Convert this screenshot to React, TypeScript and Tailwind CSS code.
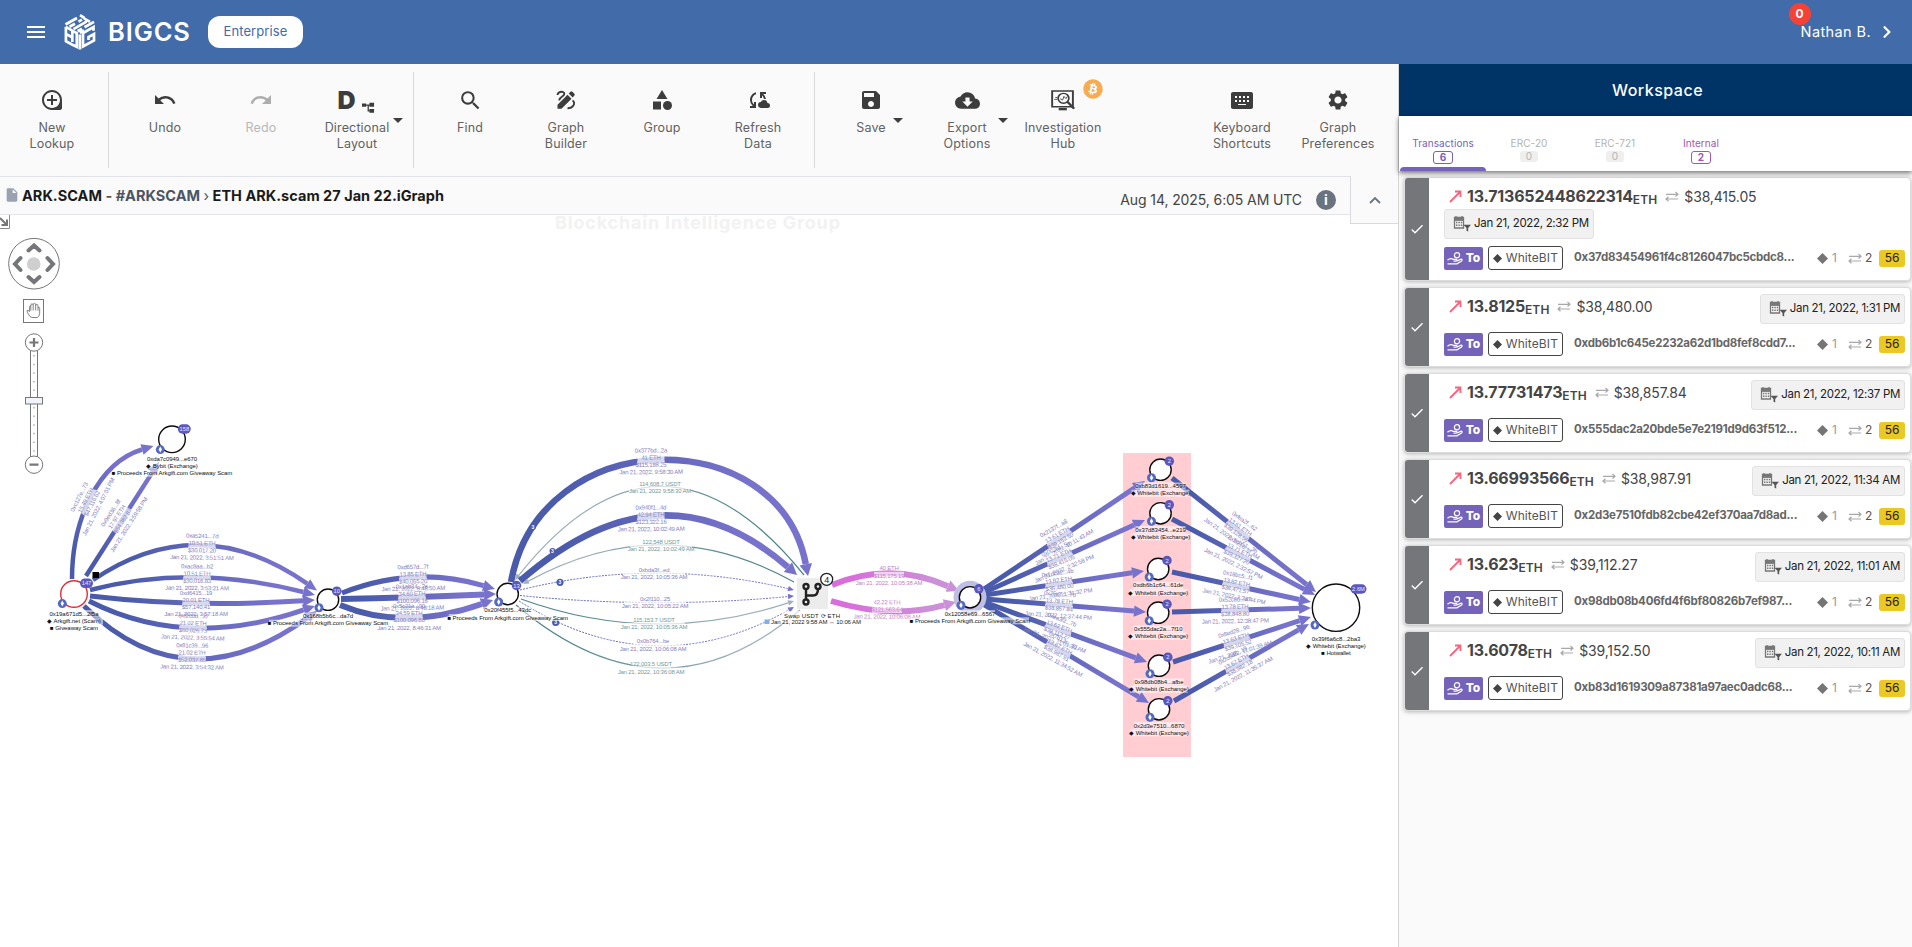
import React from "react";
import {
  MdMenu, MdUndo, MdRedo, MdSearch, MdCategory, MdSave, MdCloudDownload, MdSettings,
  MdKeyboardAlt, MdLoupe, MdCloudSync, MdArrowDropDown, MdCheck, MdInsertDriveFile,
} from "react-icons/md";
import { FaBitcoin, FaChevronRight } from "react-icons/fa";

type Pt = [number, number];

/* ---------- shared glyphs ---------- */

function Logo() {
  return (
    <svg width="32" height="36" viewBox="0 0 32 36" fill="none" stroke="#fff" strokeWidth="2.700">
      <path d="M1.500 10.500 13 4M5.500 12.800 11 9.700M14.500 7.700 18 5.700M16 1.200 20.500 4M9.500 15.200 22.500 7.700M20 4.300 26 7.800M13.500 17.300 18 14.800M20.500 13.200 30 7.900M15.800 18.800 20 16.400" />
      <path d="M1.900 12.800V27.200L8 30.500 12.800 32.800V19.200L1.900 12.800M2 20 8.300 23.400M8.300 17.500V28M15.900 20.500V35.500" />
      <path d="M29.500 16.800V13L19 19V32.500L30 26.500V20L24.500 23V26" />
    </svg>
  );
}

function LayoutGlyph() {
  return (
    <div className="flex items-end pr-[2px]">
      <span className="mr-[2px] text-[25px] leading-6 font-black text-[#3d3d3d] font-['Inter',sans-serif]">D</span>
      <svg width="13" height="11" viewBox="0 0 14 14" preserveAspectRatio="none" className="mb-[-1px] ml-1" fill="#3d3d3d">
        <path d="M0 2h4.500v4.200H0zM8 1h5v5H8zM8 9h5v4.800H8zM4 3.300h5v1.500H4zM6 4h1.400v8H6zM6.500 10.500H9V12H6.500z" />
      </svg>
    </div>
  );
}

function GraphBuilderGlyph() {
  return (
    <svg width="20" height="20" viewBox="0 0 20 20">
      <path d="M1.500 5C2 1 8.500.8 8.300 4 8.200 6.800 2.500 7 3.500 10.500M16.500 10.500C20.500 13 16.500 18.500 11.500 18.300" fill="none" stroke="#3d3d3d" strokeWidth="1.900" />
      <path d="M1.500 14.700 11.500 4.700l4 4L5.500 18.700H1.500zM12.700 3.500l1.800-1.800q1-.8 1.900 0l2 2q.8 1 0 1.900L16.700 7.400z" fill="#3d3d3d" />
    </svg>
  );
}

function InvestigationGlyph() {
  return (
    <svg width="24" height="21" viewBox="0 0 25 28" preserveAspectRatio="none" fill="none" stroke="#3d3d3d">
      <path d="M1.200 1.200h21.600v21H1.200z" strokeWidth="2" />
      <path d="M8 25.500h8.500" strokeWidth="3.200" />
      <ellipse cx="13" cy="11" rx="5.600" ry="6.600" strokeWidth="1.800" />
      <path d="M17 15.500l7 9.500" strokeWidth="2.600" />
      <path d="M9.500 11.500l2.500 2 1.500-5 2 3 1.500-3M3.500 12.500h3M4.500 10h2" strokeWidth="1" />
    </svg>
  );
}

function SwapGlyph({ className = "" }: { className?: string }) {
  return (
    <svg width="14" height="11" viewBox="0 0 14 11" fill="none" stroke="#a9a9a9" strokeWidth="1.200" className={className}>
      <path d="M1 3.300h12M10.500 1l2.500 2.300-2.500 2.200M13 8H1M3.500 5.700 1 8l2.500 2.300" />
    </svg>
  );
}

function OutArrow() {
  return (
    <svg width="13" height="13" viewBox="0 0 13 13" fill="none" stroke="#f4657f" strokeWidth="1.800">
      <path d="M1 12 11 2M6 1.500h5.500V7" />
    </svg>
  );
}

function CalendarFilter() {
  return (
    <svg width="18" height="16" viewBox="0 0 18 16">
      <path d="M1.500 1.500h9v10.500h-9zM1 4.200h10M3 0v2.500M9 0v2.500" stroke="#777" strokeWidth="1.300" fill="none" />
      <path d="M1 2h10v2.500H1z" fill="#777" />
      <path d="M3 6.500h6.500M3 9.300h6.500" stroke="#777" strokeWidth="1.400" strokeDasharray="1.400 1" />
      <path d="M10.500 8.700h7.500l-2.800 3.300V15.600l-1.700-.8v-2.800z" fill="#555" />
    </svg>
  );
}

function HandCoin() {
  return (
    <svg width="16" height="13" viewBox="0 0 16 13" fill="none" stroke="#fff" strokeWidth="1.200">
      <circle cx="10" cy="3.300" r="2.600" />
      <path d="M.5 8.200C3 5.800 5 6.400 6.500 7.400h3q1.500 1.200-.5 1.800H6.500M10 9l4-1.800q2 .3.500 1.800L10 11.800H.5" />
    </svg>
  );
}

/* ---------- top toolbar ---------- */

type ToolProps = { icon: React.ReactNode; lines: string[]; muted?: boolean; caret?: string; badge?: boolean };

function Tool({ icon, lines, muted, caret, badge }: ToolProps) {
  return (
    <div className={`relative flex w-24 flex-col items-center pt-[22px] ${muted ? "text-[#adadad]" : "text-[#3d3d3d]"}`}>
      <div className="flex h-7 items-center justify-center">{icon}</div>
      <div className={`mt-[6px] text-center text-[12.500px] leading-4 tracking-[0.150px] ${muted ? "text-[#b8b8b8]" : "text-[#626262]"}`}>
        {lines.map((l) => <div key={l}>{l}</div>)}
      </div>
      {caret && <MdArrowDropDown size={24} className={`absolute top-[44px] ${caret}`} />}
      {badge && (
        <span className="absolute top-[15px] right-[8px] flex size-5 items-center justify-center rounded-full bg-white text-[#f8ab4f]">
          <FaBitcoin size={20} />
        </span>
      )}
    </div>
  );
}

function Divider() {
  return <div className="mx-2 mt-2 h-24 w-px shrink-0 bg-[#dadada]" />;
}

/* ---------- graph ---------- */

type Edge = {
  a: Pt; b: Pt; mid?: Pt; cubic?: [Pt, Pt]; w: number; kind: "eth" | "pink" | "teal" | "dash";
  head?: boolean; label?: { at: Pt; rot?: number; lines: string[] };
};

const TONES = {
  eth: ["#4a5bab", "#7772cb", "#8581bd"],
  pink: ["#d96edb", "#cb90d8", "#bd84c2"],
  teal: ["#4f868c", "#9db0bb", "#769a9a"],
  dash: ["#5f66bd", "#7772cb", "#8581bd"],
};

const E = (a: Pt, mid: Pt | undefined, b: Pt, w: number, at: Pt, rot: number, lines: string[]): Edge =>
  ({ a, b, mid, w, kind: "eth", label: { at, rot, lines } });

const EDGES: Edge[] = [
  { a: [72, 579], b: [153.5, 446], cubic: [[72, 520], [98, 463]], w: 4.5, kind: "eth", label: { at: [89, 502], rot: -63, lines: ["0xc127e...73", "15.49 ETH", "$47,116.62", "Jan 21, 2022, 4:07:01 PM"] } },
  E([86, 576], undefined, [159, 462], 4.5, [120, 519], -57, ["0x9ed36...8f", "17.97 ETH", "$54,382.87", "Jan 21, 2022, 3:59:58 PM"]),
  E([93, 580], [202, 546.7], [317, 590.5], 4.5, [202, 547], 1, ["0xa5241...7d", "10.51 ETH", "$30,017.20", "Jan 21, 2022, 3:51:51 AM"]),
  E([90, 590], [197, 578], [315, 595], 4.5, [197, 577.5], 0.5, ["0xac8aa...b2", "10.51 ETH", "$30,016.83", "Jan 21, 2022, 3:53:21 AM"]),
  E([90, 596], [197, 603], [315, 600], 5, [196, 603.5], 0, ["0xd6415...19", "20.01 ETH", "$57,140.41", "Jan 21, 2022, 3:57:18 AM"]),
  E([89, 601], [194, 627], [315, 606], 5, [193, 627], 2, ["0xf2c0d...37", "21.02 ETH", "$60,026.73", "Jan 21, 2022, 3:55:54 AM"]),
  E([84, 606], [193, 657], [317, 611], 5, [192, 656.5], 1, ["0x81c39...96", "21.02 ETH", "$52,037.65", "Jan 21, 2022, 3:54:32 AM"]),
  E([342, 593], [416, 578], [495, 589], 5, [413, 578], -1, ["0xd657d...7f", "13.85 ETH", "$40,055.20", "Jan 21, 2022, 8:48:50 AM"]),
  E([341, 599], [413, 597], [496, 594], 6, [412, 597.5], -1, ["0x1ab34...2e", "34.60 ETH", "$100,096.16", "Jan 21, 2022, 8:48:18 AM"]),
  E([340, 605], [410, 617], [493, 600], 6, [409, 617], 0, ["0x5c21a...90", "34.59 ETH", "$100,096.88", "Jan 21, 2022, 8:46:31 AM"]),
  { a: [804, 575], b: [515, 580], mid: [660, 487.5], w: 1.2, kind: "teal", label: { at: [660, 487.5], lines: ["114,608.7 USDT", "Jan 21, 2022 9:58:30 AM"] } },
  { a: [511, 582], b: [808, 576], cubic: [[540, 422], [779, 422]], w: 6.5, kind: "eth", label: { at: [651, 461.5], rot: -0.5, lines: ["0x377bd...2a", "41 ETH", "$115,188.25", "Jan 21, 2022, 9:58:30 AM"] } },
  { a: [520, 581], b: [797, 575], mid: [660, 517.5], w: 6.5, kind: "eth", label: { at: [651, 518.5], rot: -0.5, lines: ["0x940f1...4d", "42.94 ETH", "$123,322.16", "Jan 21, 2022, 10:02:49 AM"] } },
  { a: [794, 582], b: [523, 584], mid: [660, 545.5], w: 1.2, kind: "teal", label: { at: [661, 545.5], lines: ["122,548 USDT", "Jan 21, 2022, 10:02:49 AM"] } },
  { a: [520, 590], b: [794, 590], mid: [655, 573.5], w: 1, kind: "dash", label: { at: [654, 573.5], lines: ["0xbda3f...ed", "Jan 21, 2022, 10:05:36 AM"] } },
  { a: [520, 595.5], b: [794, 596], mid: [655, 602.5], w: 1, kind: "dash", label: { at: [655, 602.5], lines: ["0x2f110...25", "Jan 21, 2022, 10:05:22 AM"] } },
  { a: [521, 599], b: [794, 601], mid: [655, 623.5], w: 1.2, kind: "teal", label: { at: [654, 623.5], lines: ["115,153.7 USDT", "Jan 21, 2022, 10:05:36 AM"] } },
  { a: [519, 601], b: [794, 607], mid: [655, 645], w: 1, kind: "dash", label: { at: [653, 645], lines: ["0x0b764...be", "Jan 21, 2022, 10:06:08 AM"] } },
  { a: [516, 605], b: [800, 610], mid: [660, 668], w: 1.2, kind: "teal", head: false, label: { at: [651, 668], lines: ["122,003.5 USDT", "Jan 21, 2022, 10:36:08 AM"] } },
  { a: [832, 585], b: [959, 591], mid: [893, 574.5], w: 6, kind: "pink", label: { at: [889, 572.5], rot: 0, lines: ["40 ETH", "$115,175.19", "Jan 21, 2022, 10:05:38 AM"] } },
  { a: [831, 601], b: [956, 602], mid: [893, 610.5], w: 6, kind: "pink", label: { at: [887, 606.5], rot: 0.5, lines: ["42.22 ETH", "$121,563.64", "Jan 21, 2022, 10:06:08 AM"] } },
  E([984, 589], undefined, [1145, 481], 5, [1059, 538], -30, ["0x2137f...a8", "13.61 ETH", "$39,152.50", "Jan 21, 2022, 10:11:43 AM"]),
  E([985, 592], undefined, [1145, 520], 5, [1060, 559], -23, ["0x0c2fd...5e", "13.71 ETH", "$38,415.05", "Jan 21, 2022, 2:32:58 PM"]),
  E([985, 595], undefined, [1144, 571], 5, [1059, 584], -8, ["0x1dc32...4b", "13.82 ETH", "$38,480.00", "Jan 21, 2022, 1:31:32 PM"]),
  E([985, 599], undefined, [1146, 612], 5, [1059, 605], 4, ["0x75e7c...70", "13.78 ETH", "$38,857.84", "Jan 21, 2022, 12:37:44 PM"]),
  E([984, 602], undefined, [1147, 662], 5, [1058, 630], 20, ["0xea3f2...7b", "13.62 ETH", "$39,112.27", "Jan 21, 2022, 11:01:30 AM"]),
  E([983, 604], undefined, [1149, 703], 5, [1058, 650], 29, ["0x7b12c...51", "13.67 ETH", "$38,987.91", "Jan 21, 2022, 11:34:52 AM"]),
  E([1172, 478], undefined, [1316, 592], 5, [1238, 530], 36, ["0xfea2f...62", "13.61 ETH", "$39,128.56", "Jan 21, 2022, 10:16:34 AM"]),
  E([1172, 519], undefined, [1315, 595], 5, [1238, 554], 26, ["0x9cb51...36", "13.71 ETH", "$38,327.20", "Jan 21, 2022, 2:32:57 PM"]),
  E([1172, 572], undefined, [1311, 602], 5, [1236, 586], 11, ["0x18bc5...f1", "13.82 ETH", "$38,471.57", "Jan 21, 2022, 1:33:44 PM"]),
  E([1172, 612], undefined, [1311, 608], 5, [1235, 610.5], -1, ["0x52c80...a7", "13.78 ETH", "$38,848.80", "Jan 21, 2022, 12:38:47 PM"]),
  E([1173, 662], undefined, [1311, 617], 5, [1237, 642], -17, ["0x8ed28...96", "13.63 ETH", "$39,105.52", "Jan 21, 2022, 11:01:39 AM"]),
  E([1174, 701], undefined, [1309, 624], 5, [1238, 665], -29, ["0x2c5d8...19", "13.67 ETH", "$38,982.18", "Jan 21, 2022, 11:35:37 AM"]),
];

function EdgeLine({ e, i }: { e: Edge; i: number }) {
  const c: Pt = e.mid
    ? [2 * e.mid[0] - (e.a[0] + e.b[0]) / 2, 2 * e.mid[1] - (e.a[1] + e.b[1]) / 2]
    : [(e.a[0] + e.b[0]) / 2, (e.a[1] + e.b[1]) / 2];
  const last = e.cubic ? e.cubic[1] : c;
  const dx = e.b[0] - last[0], dy = e.b[1] - last[1], n = Math.hypot(dx, dy);
  const ux = dx / n, uy = dy / n;
  const len = e.w > 2 ? 12 : 6;
  const half = e.w > 2 ? 3.4 + e.w * 0.45 : 2.8;
  const showHead = e.head !== false;
  const base: Pt = showHead ? [e.b[0] - ux * len, e.b[1] - uy * len] : e.b;
  const d = e.cubic
    ? `M${e.a}C${e.cubic[0]} ${e.cubic[1]} ${base}`
    : `M${e.a}Q${c} ${base}`;
  const t = TONES[e.kind];
  return (
    <g>
      <linearGradient id={`g${i}`} gradientUnits="userSpaceOnUse" x1={e.a[0]} y1={e.a[1]} x2={e.b[0]} y2={e.b[1]}>
        <stop offset="0.15" stopColor={t[0]} />
        <stop offset="0.8" stopColor={t[1]} />
      </linearGradient>
      <path d={d} fill="none" stroke={`url(#g${i})`} strokeWidth={e.w} strokeDasharray={e.kind === "dash" ? "2 1.2" : undefined} />
      {showHead && (
        <path d={`M${e.b}L${base[0] - uy * half} ${base[1] + ux * half}L${base[0] + uy * half} ${base[1] - ux * half}Z`} fill={t[1]} />
      )}
    </g>
  );
}

function EdgeLabel({ e }: { e: Edge }) {
  if (!e.label) return null;
  const { at, rot = 0, lines } = e.label;
  const ys = lines.length === 4 ? [-9, -1.8, 5.4, 12.6] : lines.length === 3 ? [-2.2, 5, 12.2] : [-1.6, 5.6];
  return (
    <g transform={`translate(${at}) rotate(${rot})`} fontSize="6" letterSpacing="-0.2" textAnchor="middle" fill={TONES[e.kind][2]}>
      {lines.length === 4 && <path d="M-13.500-7h27v7h-27zM-14 0h28v7h-28z" fill="#fff" fillOpacity="0.750" />}
      {lines.length === 3 && <path d="M-15-.7h30v7h-30z" fill="#fff" fillOpacity="0.650" />}
      {lines.length === 2 && <path d="M-20-7.500h40v7h-40zM-31-.5h62v7h-62z" fill="#fff" fillOpacity="0.700" />}
      {lines.map((l, k) => <text key={k} y={ys[k]}>{l}</text>)}
    </g>
  );
}

type NodeT = { c: Pt; r: number; badge: string; lines: string[]; red?: boolean; halo?: boolean; eth?: Pt; bd?: Pt; ly?: number };

const NODES: NodeT[] = [
  { c: [172, 439.3], r: 13.3, badge: "158", lines: ["0xda7c0949...e670", "◆ Bybit (Exchange)", "■ Proceeds From Arkgift.com Giveaway Scam"], bd: [184.3, 429], eth: [160.3, 449.6] },
  { c: [74, 594], r: 13.3, badge: "147", red: true, lines: ["0x19a671d5...2f5a", "◆ Arkgift.net (Scam)", "■ Giveaway Scam"], bd: [86.5, 583.3], eth: [62.3, 603.6] },
  { c: [328, 599.7], r: 10.7, badge: "10", lines: ["0x168b5b6c...da7d", "■ Proceeds From Arkgift.com Giveaway Scam"] },
  { c: [507.7, 594], r: 10.7, badge: "13", lines: ["0x20f455f5...43dc", "■ Proceeds From Arkgift.com Giveaway Scam"] },
  { c: [970, 597.3], r: 10.7, badge: "6", halo: true, lines: ["0x12058e69...6567", "■ Proceeds From Arkgift.com Giveaway Scam"] },
  { c: [1160.5, 469.7], r: 10.7, badge: "2", lines: ["0xb83d1619...4597", "◆ Whitebit (Exchange)"] },
  { c: [1160.5, 513.3], r: 10.7, badge: "2", lines: ["0x37d83454...e219", "◆ Whitebit (Exchange)"] },
  { c: [1158.2, 569], r: 10.7, badge: "2", lines: ["0xdb6b1c64...61de", "◆ Whitebit (Exchange)"] },
  { c: [1158.2, 612.7], r: 10.7, badge: "2", lines: ["0x555dac2a...7f10", "◆ Whitebit (Exchange)"] },
  { c: [1159, 665.7], r: 10.7, badge: "2", lines: ["0x98db08b4...afbe", "◆ Whitebit (Exchange)"] },
  { c: [1159, 709.3], r: 10.7, badge: "2", lines: ["0x2d3e7510...6870", "◆ Whitebit (Exchange)"] },
  { c: [1336, 607.7], r: 23.7, badge: "2.6M", lines: ["0x39f6a6c8...2ba3", "◆ Whitebit (Exchange)", "■ Hotwallet"], bd: [1358.5, 589], eth: [1315, 625], ly: 33 },
];

function GraphNode({ n }: { n: NodeT }) {
  const bd: Pt = n.bd ?? [n.c[0] + 8.8, n.c[1] - 8.5];
  const eth: Pt = n.eth ?? [n.c[0] - 9, n.c[1] + 8];
  const bw = n.badge.length > 2 ? (n.badge.length > 3 ? 16 : 13) : 9.5;
  const first = n.c[1] + (n.ly ?? (n.r > 12 ? 21.3 : 18));
  const tx = n.c[0];
  const ws = [50, 58, 58];
  return (
    <g>
      {n.halo && <circle cx={n.c[0]} cy={n.c[1]} r="16.500" fill="#bfbfe6" />}
      <circle cx={n.c[0]} cy={n.c[1]} r={n.r} fill="#fff" stroke={n.red ? "#e02e36" : "#0d0d0d"} strokeWidth="1.400" />
      <rect x={bd[0] - bw / 2} y={bd[1] - 4.75} width={bw} height="9.500" rx="4.750" fill="#5a57bd" />
      <text x={bd[0]} y={bd[1] + 2} fontSize="5.800" fill="#e8e8ff" textAnchor="middle">{n.badge}</text>
      <circle cx={eth[0]} cy={eth[1]} r="4.500" fill="#5469c4" />
      <path d={`M${eth[0]} ${eth[1] - 3}l1.700 3-1.700 3-1.700-3z`} fill="#fff" />
      {n.lines.map((l, k) => {
        const w = l.length > 30 ? 118 : ws[k];
        const y = first + k * 7.2 + 0.3;
        return (
          <g key={k}>
            <rect x={tx - w / 2} y={y - 5.5} width={w} height="7" fill="#fff" fillOpacity="0.550" />
            <text x={tx} y={y} fontSize="6" letterSpacing="-0.050" fill="#111" textAnchor="middle">{l}</text>
          </g>
        );
      })}
    </g>
  );
}

function PanZoom() {
  return (
    <g fill="none" stroke="#75767a">
      <path d="M9.500 215v13.500H0" stroke="#8a8a8a" strokeWidth="1" />
      <path d="M0 218l6 6M7 219.500v5.500H1.500" strokeWidth="2" />
      <circle cx="34" cy="263.700" r="25.300" strokeWidth="1" fill="#fff" />
      <circle cx="33.700" cy="264" r="6.800" fill="#cfcfcf" stroke="none" />
      <path d="M28.500 250.500l5.500-5 5.500 5M28.500 277l5.500 5 5.500-5M20.500 258l-5.500 6 5.500 6M47.500 258l5.500 6-5.500 6" strokeWidth="4" strokeLinecap="round" />
      <rect x="23.500" y="299.500" width="20" height="23" fill="#fff" />
      <path d="M30 316.500q-3.500-4.500-3-5.800.8-1.200 2.600 1v-4.700q.2-1.300 1.200-1.300v5M30.800 306q0-2.300 1.200-2.300t1.200 2.300v4.500M33.200 304.800q.2-1.500 1.300-1.500t1.200 1.500v5.700M35.700 305.500q.3-1.200 1.200-1.200t1.100 1.400v5M38 307.500q1.700-.8 1.700 1.200v4.500q-.3 3-2.200 4.300h-5.500l-2-1" strokeWidth="0.900" />
      <path d="M30.500 350h7v107h-7z" fill="#fff" />
      <path d="M34 355v98" stroke="#c4c4c4" strokeWidth="2" strokeDasharray="1.500 7.150" />
      <circle cx="34" cy="342.500" r="8.700" fill="#fff" />
      <circle cx="34" cy="464.700" r="8.700" fill="#fff" />
      <path d="M29.500 342.500h9M34 338v9M29.500 464.700h9" strokeWidth="2.200" />
      <rect x="25.500" y="397.500" width="17" height="6.500" fill="#f3f3fc" />
    </g>
  );
}

function Graph() {
  return (
    <svg width="1398" height="732" viewBox="0 215 1398 732" className="block font-['Liberation_Sans',Arial,sans-serif]">
      <text x="555" y="229" fontSize="18" fontWeight="700" fill="#f2f2f2" textLength="285" className="font-['Inter',sans-serif]">Blockchain Intelligence Group</text>
      <PanZoom />
      <rect x="1123" y="453" width="68" height="304" fill="#ffcdd2" />
      {EDGES.map((e, i) => <EdgeLine key={i} e={e} i={i} />)}
      {EDGES.map((e, i) => <EdgeLabel key={i} e={e} />)}
      <path d="M92.500 572h6.500v6h-6.500z" fill="#000" />
      {([[533, 527], [552.5, 551], [560, 582.3], [555.7, 622.5]] as Pt[]).map(([x, y], i) => (
        <g key={i}>
          <circle cx={x} cy={y} r={i < 2 ? 3 : 3.6} fill="#4b59b0" />
          <text x={x} y={y + 1.8} fontSize="5" fontWeight="700" fill="#fff" textAnchor="middle">3</text>
        </g>
      ))}
      <rect x="797" y="578" width="31" height="31" fill="#ececec" />
      <g fill="none" stroke="#222" strokeWidth="2.400">
        <circle cx="806" cy="586.500" r="2.500" /><circle cx="806" cy="602" r="2.500" /><circle cx="818" cy="586.500" r="2.500" />
        <path d="M806 589v10.500M806 595.500h7q5 0 5-6.500" />
        <circle cx="826.700" cy="579.300" r="6" fill="#fff" strokeWidth="1.300" />
      </g>
      <text x="826.700" y="582.500" fontSize="9" fill="#222" textAnchor="middle">4</text>
      <g fontSize="6" fill="#222">
        <rect x="782" y="611" width="60" height="14" fill="#fff" fillOpacity="0.600" />
        <text x="784" y="617.500" textLength="56">Swap USDT ⟳ ETH</text>
        <rect x="764.500" y="619.500" width="5" height="4.500" fill="#7db1ee" />
        <text x="771" y="624" textLength="90">Jan 21, 2022 9:58 AM ↔ 10:06 AM</text>
      </g>
      {NODES.map((n, i) => <GraphNode key={i} n={n} />)}
    </svg>
  );
}

/* ---------- workspace ---------- */

type Tx = { amount: string; usd: string; date: string; addr: string; wrapped?: boolean };

const TXS: Tx[] = [
  { amount: "13.713652448622314", usd: "$38,415.05", date: "Jan 21, 2022, 2:32 PM", addr: "0x37d83454961f4c8126047bc5cbdc8...", wrapped: true },
  { amount: "13.8125", usd: "$38,480.00", date: "Jan 21, 2022, 1:31 PM", addr: "0xdb6b1c645e2232a62d1bd8fef8cdd7..." },
  { amount: "13.77731473", usd: "$38,857.84", date: "Jan 21, 2022, 12:37 PM", addr: "0x555dac2a20bde5e7e2191d9d63f512..." },
  { amount: "13.66993566", usd: "$38,987.91", date: "Jan 21, 2022, 11:34 AM", addr: "0x2d3e7510fdb82cbe42ef370aa7d8ad..." },
  { amount: "13.623", usd: "$39,112.27", date: "Jan 21, 2022, 11:01 AM", addr: "0x98db08b406fd4f6bf80826b7ef987..." },
  { amount: "13.6078", usd: "$39,152.50", date: "Jan 21, 2022, 10:11 AM", addr: "0xb83d1619309a87381a97aec0adc68..." },
];

function DateChip({ date }: { date: string }) {
  return (
    <div className="flex h-[30px] shrink-0 items-center gap-[3px] rounded-[3px] border border-[#e2e2e2] bg-[#f1f1f1] pr-1 pl-2 text-[11.500px] tracking-[-0.320px] text-[#222]">
      <CalendarFilter />
      <span>{date}</span>
    </div>
  );
}

function TxCard({ tx }: { tx: Tx }) {
  return (
    <div className={`flex overflow-hidden rounded-[4px] border border-[#dcdcdc] bg-white shadow-[0_1px_4px_rgba(0,0,0,0.28)] ${tx.wrapped ? "h-[104px]" : "h-[80px]"}`}>
      <div className="flex w-[24px] shrink-0 items-center justify-center bg-[#75767a] text-white"><MdCheck size={16} /></div>
      <div className="flex min-w-0 grow flex-col pt-[6px] pr-[5px] pl-[15px]">
        <div className={`flex justify-between ${tx.wrapped ? "h-[25px]" : "h-[30px]"}`}>
          <div className="flex h-[24px] items-center pl-[5px] text-[#454545]">
            <OutArrow />
            <span className="ml-[5px] text-[16px] font-bold tracking-[-0.200px]">{tx.amount}</span>
            <span className="mt-2 text-[12px] font-semibold tracking-[0.100px]">ETH</span>
            <SwapGlyph className="ml-[8px]" />
            <span className="ml-[5px] text-[14px] tracking-[-0.150px]">{tx.usd}</span>
          </div>
          {!tx.wrapped && <DateChip date={tx.date} />}
        </div>
        {tx.wrapped && <div className="flex"><DateChip date={tx.date} /></div>}
        <div className={`flex h-6 items-center ${tx.wrapped ? "mt-[7px]" : "mt-[8px]"}`}>
          <div className="flex h-[23px] w-[39px] items-center justify-center gap-[3px] rounded-[2px] bg-[#7463b9] text-[12px] font-extrabold text-white"><HandCoin />To</div>
          <div className="ml-[5px] flex h-6 w-[75px] items-center justify-between rounded-[3px] border border-[#444] px-[4px] text-[12px] text-[#555]">
            <svg width="9" height="9" viewBox="0 0 9 9"><path d="M4.500 0 9 4.500 4.500 9 0 4.500z" fill="#444" /></svg>
            <span className="tracking-[0.100px]">WhiteBIT</span>
          </div>
          <div className="ml-[11px] w-[243px] shrink-0 text-[11.500px] font-bold tracking-[-0.250px] whitespace-nowrap text-[#666]">{tx.addr}</div>
          <svg width="11" height="11" viewBox="0 0 11 11"><path d="M5.500 0 11 5.500 5.500 11 0 5.500z" fill="#757575" /></svg>
          <span className="ml-1 w-[16px] text-[12px] text-[#999]">1</span>
          <SwapGlyph />
          <span className="ml-[3px] text-[12px] text-[#555]">2</span>
          <span className="ml-auto flex h-[17px] w-[26px] items-center justify-center rounded-[3px] bg-[#ecc823] text-[12px] text-[#222]">56</span>
        </div>
      </div>
    </div>
  );
}

function Tab({ name, count, tone }: { name: string; count: string; tone: "on" | "off" | "pink" }) {
  const text = { on: "text-[#7463b9]", off: "text-[#b3b3b3]", pink: "text-[#a655b0]" }[tone];
  const chip = {
    on: "h-[13px] w-5 border border-[#7463b9] font-bold",
    off: "h-[11px] w-[18px] bg-[#efefef]",
    pink: "h-[13px] w-5 border border-[#a655b0] font-bold",
  }[tone];
  return (
    <div className={`relative flex w-[86px] flex-col items-center pt-[21px] text-[10px] leading-[13px] tracking-[0.080px] ${text}`}>
      <span>{name}</span>
      <span className={`mt-[1px] flex items-center justify-center rounded-[3px] ${chip}`}>{count}</span>
      {tone === "on" && <span className="absolute inset-x-0 bottom-0 h-1 rounded-t bg-[#7463b9]" />}
    </div>
  );
}

export default function App() {
  return (
    <div className="flex h-[947px] w-[1912px] flex-col overflow-hidden bg-white font-['Inter','Open_Sans',sans-serif]">
      <header className="flex h-16 shrink-0 items-center bg-[#426ba9] pl-[24px] text-white">
        <MdMenu size={24} />
        <div className="ml-[16px]"><Logo /></div>
        <span className="ml-[12px] w-[83px] text-[25.500px] font-semibold tracking-[0.900px]">BIGCS</span>
        <span className="ml-[17px] flex h-8 w-[95px] items-center justify-center rounded-[12px] bg-white text-[13px] tracking-[0.100px] text-[#426ba9]">Enterprise</span>
        <div className="relative mr-[18px] ml-auto flex items-center">
          <span className="text-[14.500px] tracking-[0.400px]">Nathan B.</span>
          <FaChevronRight size={14} className="ml-[9px]" />
          <span className="absolute top-[-18px] left-[-12px] flex size-[22px] items-center justify-center rounded-full bg-[#f44336] text-[12px] font-bold">0</span>
        </div>
      </header>

      <div className="flex min-h-0 grow">
        <main className="flex w-[1398px] shrink-0 flex-col">
          <div className="flex h-28 shrink-0 bg-[#fafafa] pl-[4px]">
            <Tool icon={<MdLoupe size={24} />} lines={["New", "Lookup"]} />
            <Divider />
            <Tool icon={<MdUndo size={24} />} lines={["Undo"]} />
            <Tool icon={<MdRedo size={24} />} lines={["Redo"]} muted />
            <Tool icon={<LayoutGlyph />} lines={["Directional", "Layout"]} caret="right-[-5px]" />
            <Divider />
            <Tool icon={<MdSearch size={25} />} lines={["Find"]} />
            <Tool icon={<GraphBuilderGlyph />} lines={["Graph", "Builder"]} />
            <Tool icon={<MdCategory size={24} />} lines={["Group"]} />
            <Tool icon={<MdCloudSync size={24} />} lines={["Refresh", "Data"]} />
            <Divider />
            <Tool icon={<MdSave size={24} />} lines={["Save"]} caret="right-[9px]" />
            <Tool icon={<MdCloudDownload size={25} />} lines={["Export", "Options"]} caret="right-[0px]" />
            <Tool icon={<InvestigationGlyph />} lines={["Investigation", "Hub"]} badge />
            <div className="ml-auto flex pr-3">
              <Tool icon={<MdKeyboardAlt size={24} />} lines={["Keyboard", "Shortcuts"]} />
              <Tool icon={<MdSettings size={24} />} lines={["Graph", "Preferences"]} />
            </div>
          </div>
          <div className="flex h-[39px] shrink-0">
            <div className="flex grow items-center border-y border-[#e2e3e8] bg-[#fafafa] pl-[5px]">
              <MdInsertDriveFile size={16} className="mb-[2px] ml-[-1px] text-[#9aa1b0]" />
              <span className="ml-[2px] text-[14.500px] font-bold tracking-[0.020px] text-[#1a1a1a]">
                ARK.SCAM <span className="text-[#555]">-</span> <span className="text-[#4b5563]">#ARKSCAM</span> <span className="font-normal text-[#555]">›</span> ETH ARK.scam 27 Jan 22.iGraph
              </span>
              <span className="mt-[8px] ml-auto text-[14px] tracking-[-0.100px] text-[#444]">Aug 14, 2025, 6:05 AM UTC</span>
              <span className="mt-[8px] mr-[14px] ml-[14px] flex size-5 items-center justify-center rounded-full bg-[#6b7280] text-[14px] font-bold text-white">i</span>
            </div>
            <div className="relative z-10 flex h-[48px] w-[48px] shrink-0 items-center justify-center border-b border-l border-[#d9dade] bg-[#fafafa]">
              <svg width="12" height="8" viewBox="0 0 12 8" fill="none" stroke="#6b7280" strokeWidth="1.800"><path d="M1 7l5-5 5 5" /></svg>
            </div>
          </div>
          <Graph />
        </main>

        <aside className="flex grow flex-col border-l border-[#d4d4d4] bg-[#fafafa]">
          <div className="flex h-[52px] shrink-0 items-center justify-center bg-[#003366] pl-[4px] text-[16px] font-medium tracking-[0.500px] text-white">Workspace</div>
          <div className="relative flex h-[55px] shrink-0 bg-white pl-px shadow-[0_2px_5px_rgba(0,0,0,0.55)]">
            <Tab name="Transactions" count="6" tone="on" />
            <Tab name="ERC-20" count="0" tone="off" />
            <Tab name="ERC-721" count="0" tone="off" />
            <Tab name="Internal" count="2" tone="pink" />
          </div>
          <div className="flex flex-col gap-[6px] pt-[6px] pr-px pl-[5px]">
            {TXS.map((t) => <TxCard key={t.addr} tx={t} />)}
          </div>
        </aside>
      </div>
    </div>
  );
}
